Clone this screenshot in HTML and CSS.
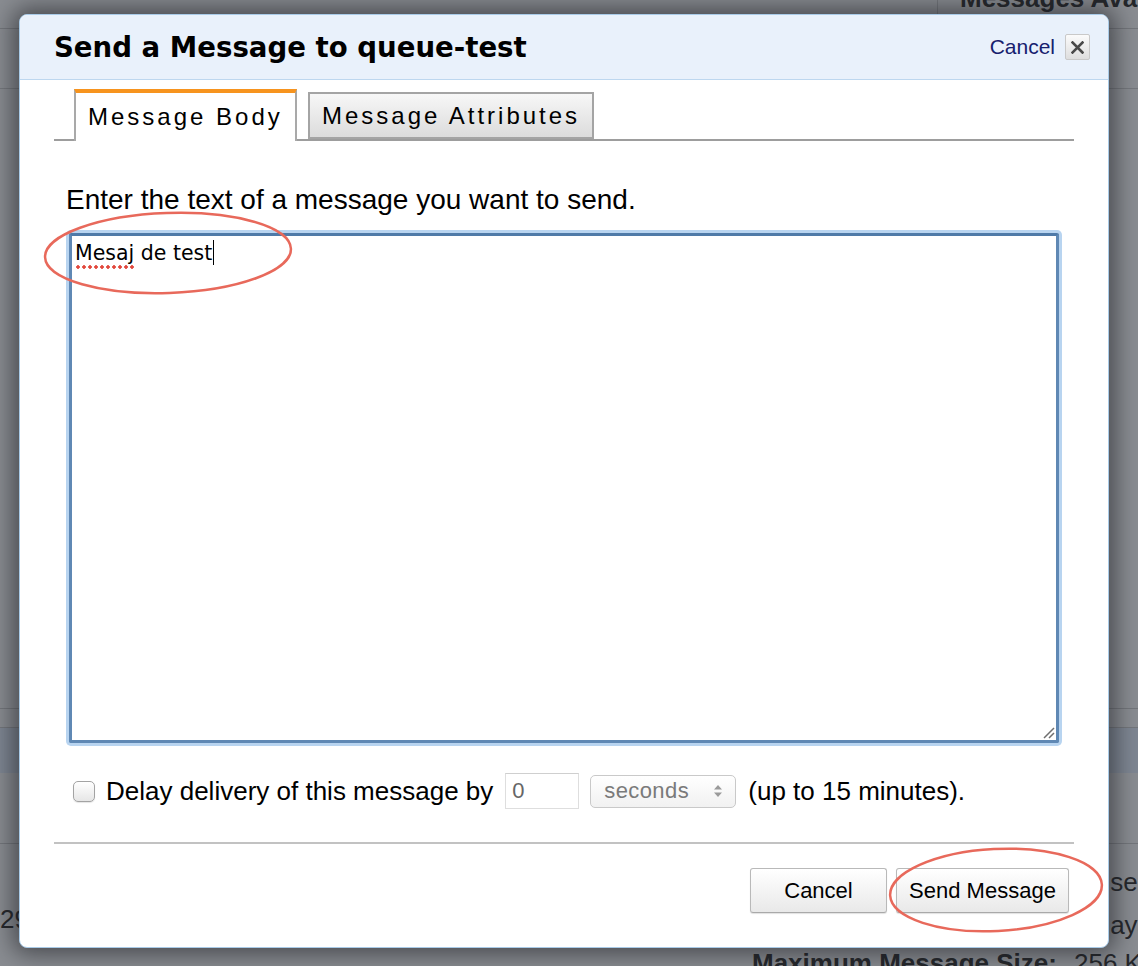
FILE: index.html
```html
<!DOCTYPE html>
<html>
<head>
<meta charset="utf-8">
<title>Send a Message</title>
<link rel="stylesheet" href="styles.css">
</head>
<body>
<div class="page">
  <div class="page-top">
    <div class="page-top-left"></div>
    <div class="page-top-right"><span class="stat-label">Messages Available</span></div>
  </div>
  <div class="page-row"></div>
  <div class="page-space"></div>
  <div class="page-line"></div>
  <div class="page-band"></div>
  <div class="page-section"></div>
  <div class="details">
    <div class="details-left">
      <div class="d-row">29 Jul 2015</div>
    </div>
    <div class="details-right">
      <div class="d-row d-row-1"><b>Default Visibility Timeout:</b><span class="d-val">30 seconds</span></div>
      <div class="d-row d-row-2"><b>Message Retention Period:</b><span class="d-val">4 days</span></div>
      <div class="d-row d-row-3"><b>Maximum Message Size:</b><span class="d-val">256 KB</span></div>
    </div>
  </div>
</div>

<div class="modal">
  <div class="modal-header">
    <h1 class="modal-title">Send a Message to queue-test</h1>
    <div class="modal-close">
      <a class="close-link">Cancel</a>
      <span class="close-box"><svg width="13" height="13" viewBox="0 0 13 13"><path d="M1.5 1.5 L11.5 11.5 M11.5 1.5 L1.5 11.5" stroke="#4a4a4a" stroke-width="2.6" stroke-linecap="square"/></svg></span>
    </div>
  </div>
  <div class="modal-body">
    <div class="tabs">
      <div class="tab tab-active">Message Body</div>
      <div class="tab tab-inactive">Message Attributes</div>
    </div>
    <p class="prompt">Enter the text of a message you want to send.</p>
    <div class="editor">
      <div class="editor-text"><span class="misspelled">Mesaj</span> de test<span class="caret"></span></div>
      <svg class="grip" width="14" height="14" viewBox="0 0 14 14"><path d="M3 13 L13 3 M8 13 L13 8" stroke="#6f6f6f" stroke-width="1.5"/></svg>
    </div>
    <div class="delay">
      <span class="checkbox"></span>
      <span class="delay-text">Delay delivery of this message by</span>
      <span class="num-input">0</span>
      <span class="select">seconds<svg width="10" height="14" viewBox="0 0 10 14"><path d="M5 1 L9 5.5 H1 Z M5 13 L9 8.5 H1 Z" fill="#9a9a9a"/></svg></span>
      <span class="delay-text">(up to 15 minutes).</span>
    </div>
    <div class="separator"></div>
    <div class="actions">
      <button class="btn">Cancel</button>
      <button class="btn">Send Message</button>
    </div>
  </div>
</div>

<svg class="annotations" width="1138" height="966" viewBox="0 0 1138 966">
  <ellipse cx="168" cy="253" rx="123" ry="40" transform="rotate(-2 168 253)" fill="none" stroke="#e8695b" stroke-width="2.5"/>
  <ellipse cx="996" cy="890" rx="106" ry="41" transform="rotate(-3 996 890)" fill="none" stroke="#e8695b" stroke-width="2.5"/>
</svg>
</body>
</html>
```

FILE: styles.css
```css
html, body {
  margin: 0;
  padding: 0;
}
body {
  width: 1138px;
  height: 966px;
  overflow: hidden;
  position: relative;
  background: #8a8d92;
  font-family: "Liberation Sans", Arial, sans-serif;
  color: #000;
}

/* ---------- dimmed page behind ---------- */
.page {
  display: flex;
  flex-direction: column;
  height: 966px;
}
.page-top {
  height: 28px;
  flex: none;
  display: flex;
  border-bottom: 1px solid #74777c;
}
.page-top-left {
  width: 937px;
}
.page-top-right {
  flex: 1;
  border-left: 1px solid #76797e;
  padding-left: 22px;
  overflow: hidden;
}
.stat-label {
  display: block;
  margin-top: -17px;
  font-weight: bold;
  font-size: 26px;
  color: #25272b;
  white-space: nowrap;
}
.page-row {
  height: 59px;
  flex: none;
  border-bottom: 1px solid #76797e;
}
.page-space {
  height: 619px;
  flex: none;
}
.page-line {
  height: 18px;
  flex: none;
  border-top: 1px solid #74777c;
  border-bottom: 1px solid #74777c;
}
.page-band {
  height: 45px;
  flex: none;
  background: #7f8793;
}
.page-section {
  height: 70px;
  flex: none;
  border-bottom: 1px solid #74777c;
}
.details {
  display: grid;
  grid-template-columns: 752px 1fr;
  font-size: 26px;
  color: #25272b;
  white-space: nowrap;
}
.details-left {
  padding-top: 60px;
}
.details-right {
  padding-top: 23px;
  display: flex;
  flex-direction: column;
}
.d-row {
  display: flex;
  gap: 10px;
  line-height: 30px;
}
.d-row-2 {
  margin-top: 13px;
}
.d-row-3 {
  margin-top: 8px;
}
.d-row b {
  width: 312px;
  flex: none;
}

/* ---------- modal ---------- */
.modal {
  position: absolute;
  left: 19px;
  top: 14px;
  width: 1088px;
  height: 932px;
  background: #fff;
  border: 1px solid #a9cbe8;
  border-radius: 8px;
  box-shadow: 0 0 24px 6px rgba(25, 27, 32, 0.6);
  display: flex;
  flex-direction: column;
  overflow: hidden;
}
.modal-header {
  height: 64px;
  flex: none;
  background: #e9f1fb;
  border-bottom: 1px solid #bdd7ef;
  display: flex;
  align-items: center;
  justify-content: space-between;
  padding: 0 18px 0 34px;
}
.modal-title {
  margin: 0;
  font-family: "DejaVu Sans", Verdana, sans-serif;
  font-weight: bold;
  font-size: 27.6px;
  color: #000;
}
.modal-close {
  display: flex;
  align-items: center;
  gap: 10px;
}
.close-link {
  font-size: 21px;
  color: #16206e;
}
.close-box {
  width: 23px;
  height: 24px;
  border: 1px solid #c9c9c9;
  border-radius: 2px;
  background: linear-gradient(#fbfbfb, #dedede);
  display: flex;
  align-items: center;
  justify-content: center;
}

.modal-body {
  padding: 9px 34px 0 34px;
}
.tabs {
  height: 50px;
  display: flex;
  align-items: flex-end;
  gap: 11px;
  padding-left: 20px;
  border-bottom: 2px solid #9d9d9d;
}
.tab {
  box-sizing: border-box;
  display: flex;
  align-items: center;
  padding-left: 12px;
  font-size: 24px;
  letter-spacing: 3px;
  white-space: nowrap;
}
.tab-active {
  width: 223px;
  height: 52px;
  margin-bottom: -2px;
  background: #fff;
  border: 2px solid #a9a9a9;
  border-top: 4px solid #f7941e;
  border-bottom: none;
}
.tab-inactive {
  width: 286px;
  height: 47px;
  border: 2px solid #a4a4a4;
  background: linear-gradient(#f7f7f7, #dcdcdc);
}

.prompt {
  margin: 44px 0 0 12px;
  font-size: 28px;
  line-height: 30px;
}

.editor {
  position: relative;
  box-sizing: border-box;
  height: 510px;
  margin: 18px 15px 0 15px;
  border: 3px solid #5f88b4;
  border-top-color: #4f7aa8;
  border-radius: 2px;
  box-shadow: 0 0 0 3px #b8d4f0;
  padding: 4px 3px;
}
.editor-text {
  font-family: "DejaVu Sans", sans-serif;
  font-size: 20.5px;
  line-height: 24px;
  display: flex;
  align-items: center;
  white-space: pre;
}
.misspelled {
  position: relative;
}
.misspelled::after {
  content: "";
  position: absolute;
  left: 0;
  right: 0;
  bottom: -4px;
  height: 4px;
  background: radial-gradient(circle, #e2483d 1.5px, transparent 2px) repeat-x;
  background-size: 6px 4px;
}
.caret {
  display: inline-block;
  width: 0;
  height: 25px;
  border-left: 1.5px solid #000;
  margin-left: 1px;
}
.grip {
  position: absolute;
  right: 1px;
  bottom: 1px;
}

.delay {
  margin-top: 30px;
  height: 36px;
  display: flex;
  align-items: center;
  padding-left: 19px;
  font-size: 26px;
}
.checkbox {
  box-sizing: border-box;
  width: 22px;
  height: 21px;
  border: 1px solid #a3a3a3;
  border-radius: 5px;
  background: linear-gradient(#ffffff, #e6e6e6);
  box-shadow: 0 1px 1px rgba(0,0,0,0.1);
  margin-right: 11px;
}
.delay-text {
  white-space: nowrap;
}
.num-input {
  box-sizing: border-box;
  width: 74px;
  height: 36px;
  margin: 0 11px 0 12px;
  border: 1px solid #dedede;
  border-top-color: #cfcfcf;
  padding-left: 6px;
  font-size: 22px;
  color: #666;
  display: flex;
  align-items: center;
}
.select {
  box-sizing: border-box;
  width: 146px;
  height: 33px;
  margin-right: 12px;
  border: 1px solid #c9c9c9;
  border-radius: 5px;
  background: linear-gradient(#ffffff, #f1f1f1);
  padding: 0 12px 0 13px;
  font-size: 22px;
  letter-spacing: 0.4px;
  color: #7a7a7a;
  display: flex;
  align-items: center;
  justify-content: space-between;
}

.separator {
  margin-top: 33px;
  height: 2px;
  background: #c2c2c2;
}

.actions {
  margin-top: 24px;
  display: flex;
  justify-content: flex-end;
  gap: 9px;
  padding-right: 5px;
}
.btn {
  box-sizing: border-box;
  height: 45px;
  border: 1px solid #b9b9b9;
  border-bottom-color: #a9a9a9;
  border-radius: 3px;
  background: linear-gradient(#ffffff, #e9e9e9);
  box-shadow: 0 1px 1px rgba(0,0,0,0.12);
  font-family: "Liberation Sans", Arial, sans-serif;
  font-size: 22px;
  color: #000;
  padding: 0;
}
.btn:first-child {
  width: 137px;
}
.btn:last-child {
  width: 173px;
}

.annotations {
  position: absolute;
  left: 0;
  top: 0;
  pointer-events: none;
}
```
